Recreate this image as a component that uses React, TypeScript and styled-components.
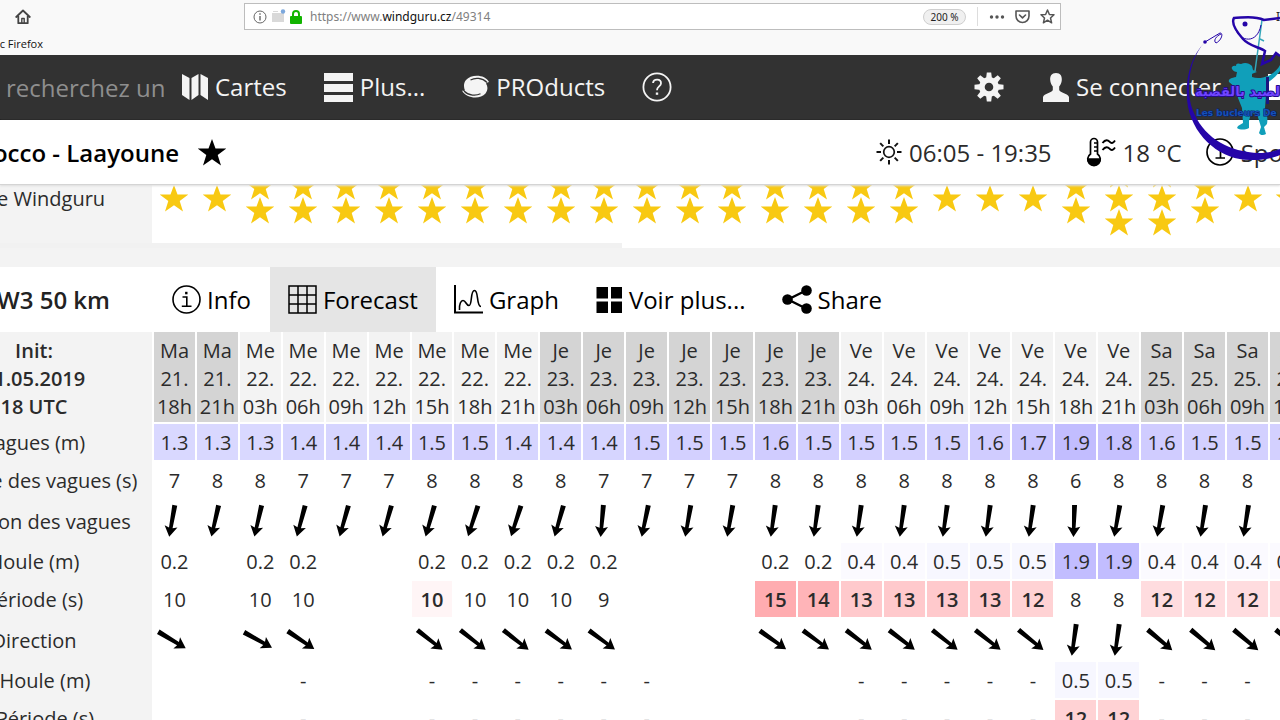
import React from "react";
import styled, { createGlobalStyle } from "styled-components";

const GlobalStyle = createGlobalStyle`
  * { box-sizing: border-box; }
  html, body { margin: 0; padding: 0; }
  body {
    background: #fff;
    color: #2b2b2b;
    font-family: "Open Sans", "Noto Sans", sans-serif;
    overflow-x: hidden;
  }
  button, input { font: inherit; color: inherit; }
`;

const Page = styled.div`
  position: relative;
  height: 100vh;
  overflow: hidden;
`;

/* ---------- browser chrome ---------- */

const Chrome = styled.div`
  background: #f9f9f9;
  height: 55px;
  font-family: "Noto Sans", "Open Sans", sans-serif;
  font-size: 12px;
  overflow: hidden;
`;

const ToolRow = styled.div`
  display: flex;
  align-items: center;
  padding-top: 3px;
  height: 30px;
`;

const ToolSide = styled.div<{ $width: number; $end?: boolean }>`
  flex: none;
  width: ${(p) => p.$width}px;
  display: flex;
  align-items: center;
  padding-left: ${(p) => (p.$end ? 0 : 15)}px;
`;

const EdgeLabel = styled.span`
  margin-left: auto;
  width: 4px;
  white-space: nowrap;
`;

const PlainButton = styled.button`
  display: inline-flex;
  align-items: center;
  flex: none;
  padding: 0;
  border: 0;
  background: none;
  cursor: pointer;
`;

const UrlBox = styled.div`
  flex: 1;
  display: flex;
  align-items: center;
  height: 27px;
  padding: 0 5px 0 8px;
  background: #fff;
  border: 1px solid #bdbdbd;
`;

const Url = styled.div`
  flex: 1;
  margin-left: 8px;
  color: #808080;
  b { font-weight: 400; color: #111; }
`;

const Badges = styled.div`
  display: flex;
  align-items: center;
  gap: 4px;
`;

const ZoomPill = styled.button`
  width: 43px;
  height: 16px;
  padding: 0;
  border: 1px solid #cfcfcf;
  border-radius: 8px;
  background: #f0f0f0;
  color: #222;
  font-size: 10px;
  line-height: 14px;
`;

const UrlActions = styled.div`
  display: flex;
  align-items: center;
  gap: 10px;
  height: 19px;
  margin-left: 11px;
  padding-left: 11px;
  border-left: 1px solid #ddd;
`;

const Bookmark = styled.a`
  display: flex;
  justify-content: flex-end;
  width: 43px;
  padding-top: 3px;
  color: #111;
  font-family: "Open Sans", sans-serif;
  font-size: 11px;
  line-height: 22px;
  white-space: nowrap;
  text-decoration: none;
`;

/* ---------- site header ---------- */

const Nav = styled.nav`
  display: flex;
  align-items: center;
  height: 65px;
  padding-left: 6px;
  background: #323232;
  border-bottom: 1px solid #1c1c1c;
  color: #f4f4f4;
  font-size: 24px;
  overflow: hidden;
`;

const Search = styled.input`
  width: 158px;
  margin-right: 18px;
  padding: 0;
  border: 0;
  outline: 0;
  background: none;
  &::placeholder { color: #8e8e8e; opacity: 1; }
`;

const NavLinks = styled.div`
  display: flex;
  align-items: center;
  gap: 37px;
`;

const NavLink = styled.a`
  display: flex;
  align-items: center;
  flex: none;
  gap: 7px;
  color: inherit;
  line-height: 32px;
  text-decoration: none;
  white-space: nowrap;
`;

const RightGroup = styled.div<{ $width: number; $gap: number }>`
  flex: none;
  width: ${(p) => p.$width}px;
  min-width: 0;
  display: flex;
  align-items: center;
  gap: ${(p) => p.$gap}px;
  margin-left: auto;
`;

const WhiteTile = styled.span`
  flex: none;
  width: 26px;
  height: 26px;
  margin-left: 8px;
  background: #fff;
`;

const SpotBar = styled.header`
  display: flex;
  align-items: center;
  position: relative;
  height: 65px;
  background: #fff;
  border-bottom: 1px solid #d4d4d4;
  box-shadow: 0 1px 2px #ddd;
  font-size: 24px;
  overflow: hidden;
`;

const EndText = styled.h1<{ $width: number }>`
  display: flex;
  justify-content: flex-end;
  flex: none;
  width: ${(p) => p.$width}px;
  margin: 0;
  color: #000;
  font-size: 24px;
  font-weight: 600;
  white-space: nowrap;
`;

const SpotFact = styled.span`
  display: flex;
  align-items: center;
  flex: none;
  gap: 7px;
  white-space: nowrap;
`;

const FactPair = styled.div`
  display: flex;
  flex: none;
  gap: 24px;
`;

/* ---------- forecast ---------- */

const Section = styled.section`
  background: #f3f3f3;
  overflow: hidden;
`;

const Sheet = styled.table<{ $lift?: boolean }>`
  table-layout: fixed;
  width: calc(100% + 115px);
  margin: ${(p) => (p.$lift ? "-31px" : "0")} 0 0 -84px;
  border-collapse: separate;
  border-spacing: 0;
  background: #fff;
  font-size: 20px;
  col:first-child { width: 236px; }
`;

const LabelCell = styled.th<{ $bold?: boolean }>`
  padding: ${(p) => (p.$bold ? 2 : 0)}px 0 0;
  background: #f3f3f3;
  font-weight: ${(p) => (p.$bold ? 600 : 400)};
  line-height: 28px;
  white-space: nowrap;
  text-align: center;
`;

const DayCell = styled.th<{ $dark: boolean }>`
  height: 92px;
  padding: 5px 0 1px;
  border-left: 2px solid #fff;
  border-bottom: 2px solid #fff;
  background: ${(p) => (p.$dark ? "#d4d4d4" : "#f3f3f3")};
  font-weight: 400;
  line-height: 28px;
  white-space: nowrap;
`;

const Cell = styled.td<{ $bg?: string; $bold?: boolean; $tall?: boolean }>`
  height: ${(p) => (p.$tall ? 43 : 38)}px;
  padding: ${(p) => (p.$tall ? 0 : 2)}px 0 0;
  border-left: 2px solid #fff;
  border-bottom: 2px solid #fff;
  background: ${(p) => p.$bg ?? "#fff"};
  font-weight: ${(p) => (p.$bold ? 600 : 400)};
  line-height: 28px;
  text-align: center;
  white-space: nowrap;
`;

const StarCell = styled.td`
  height: 89px;
  padding: 0 0 2px;
`;

const StarStack = styled.div`
  display: flex;
  flex-direction: column;
  align-items: center;
  padding-left: 2px;
  svg { margin: -1px 0 -2px; }
`;

const ScrollTrack = styled.div`
  height: 5px;
  background: #fff;
`;

const ScrollThumb = styled.div`
  width: 622px;
  height: 5px;
  background: #f1f1f1;
`;

const Spacer = styled.div`
  height: 19px;
`;

const TabBar = styled.div`
  display: flex;
  align-items: stretch;
  height: 65px;
  background: #fff;
`;

const Model = styled(EndText).attrs({ as: "h2" })`
  align-items: center;
  margin-right: 44px;
  color: #222;
`;

const Tab = styled.button<{ $active?: boolean }>`
  display: flex;
  align-items: center;
  flex: none;
  gap: 6px;
  padding: 0 18px;
  border: 0;
  background: ${(p) => (p.$active ? "#e5e5e5" : "transparent")};
  color: #000;
  font-size: 24px;
  white-space: nowrap;
  cursor: pointer;
  &:first-of-type { padding-right: 19px; }
`;

const Arrow = styled.svg`
  display: block;
  margin: 0 auto;
  overflow: visible;
`;

const Watermark = styled.svg`
  position: absolute;
  top: 0;
  right: 0;
  pointer-events: none;
`;

const Block = styled.svg`
  display: block;
  flex: none;
`;

const StarButton = styled(PlainButton)`
  margin-left: 19px;
`;

/* ---------- data ---------- */

const days: [string, string, string[]][] = [
  ["Ma", "21.", ["18h", "21h"]],
  ["Me", "22.", ["03h", "06h", "09h", "12h", "15h", "18h", "21h"]],
  ["Je", "23.", ["03h", "06h", "09h", "12h", "15h", "18h", "21h"]],
  ["Ve", "24.", ["03h", "06h", "09h", "12h", "15h", "18h", "21h"]],
  ["Sa", "25.", ["03h", "06h", "09h", "12h"]],
];
const columns = days.flatMap(([day, date, hours], i) =>
  hours.map((hour) => ({ day, date, hour, dark: i % 2 === 0 }))
);

const stars = [1, 1, 2, 2, 2, 2, 2, 2, 2, 2, 2, 2, 2, 2, 2, 2, 2, 2, 1, 1, 1, 2, 3, 3, 2, 1, 1];
const waves = "1.3 1.3 1.3 1.4 1.4 1.4 1.5 1.5 1.4 1.4 1.4 1.5 1.5 1.5 1.6 1.5 1.5 1.5 1.5 1.6 1.7 1.9 1.8 1.6 1.5 1.5 1.5".split(" ");
const wavePeriods = "7 8 8 7 7 7 8 8 8 8 7 7 7 7 8 8 8 8 8 8 8 6 8 8 8 8 8".split(" ");
const waveAngles = [10, 13, 13, 15, 16, 16, 16, 18, 18, 16, 5, 12, 10, 10, 8, 8, 8, 8, 8, 8, 8, 2, 10, 10, 9, 9, 9];
const swell = "0.2 _ 0.2 0.2 _ _ 0.2 0.2 0.2 0.2 0.2 _ _ _ 0.2 0.2 0.4 0.4 0.5 0.5 0.5 1.9 1.9 0.4 0.4 0.4 0.4".split(" ");
const swellPeriods = "10 _ 10 10 _ _ 10* 10 10 10 9 _ _ _ 15* 14* 13* 13* 13* 13* 12** 8 8 12* 12* 12* 12*".split(" ");
const swellAngles = [-59, null, -61, -56, null, null, -52, -52, -52, -54, -54, null, null, null, -55, -54, -53, -53, -52, -52, -51, 8, 8, -50, -50, -50, -50];
const swell2 = "_ _ _ - _ _ - - - - - - _ _ _ _ - - - - - 0.5 0.5 - - - -".split(" ");
const swell2Periods = "_ _ _ - _ _ - - - - - - _ _ _ _ - - - - - 12** 12** - - - -".split(" ");

const heightTint: Record<string, string> = {
  "0.4": "#fbfaff", "0.5": "#f7f7ff", "1.3": "#d9d8ff", "1.4": "#d6d5ff", "1.5": "#d3d0ff",
  "1.6": "#d0ccff", "1.7": "#cac6ff", "1.8": "#c6c1ff", "1.9": "#c2bdff",
};
const periodTint: Record<string, string> = {
  "10*": "#fff5f6", "12*": "#ffdcdf", "12**": "#ffd2d4", "13*": "#ffc9cc", "14*": "#ffb4b8", "15*": "#ffacb0",
};

/* ---------- drawings ---------- */

const StarIcon = ({ color = "#f8c912" }) => (
  <Block width="28" height="27" viewBox="0 0 28 27" fill={color}>
    <path d="M14 0 17.500 9.500H28.500L19.700 16 23 26.500 14 20.200 5 26.500 8.300 16 -.5 9.500H10.500Z" />
  </Block>
);

const DirArrow = ({ angle }: { angle: number }) => (
  <Arrow width="32" height="32" viewBox="-14 -16 32 32">
    <path transform={`rotate(${angle})`} d="M-2.500 -16H2.500L1.800 7 6.500 5.500 0 16-6.500 5.500-1.800 7Z" />
  </Arrow>
);

const HomeIcon = () => (
  <Block width="16" height="16" viewBox="0 0 16 16" fill="none" stroke="#444" strokeWidth="1.8" strokeLinejoin="round" strokeLinecap="round">
    <path d="M1.2 8 8 1.5 14.8 8M3.3 7v7.2h9.4V7" />
    <path d="M6.8 14V9.5h2.4V14" strokeWidth="1.4" />
  </Block>
);

const SmallInfoIcon = () => (
  <Block width="14" height="14" viewBox="0 0 14 14" fill="none" stroke="#666">
    <circle cx="7" cy="7" r="6" />
    <path d="M7 6v4.5M7 3.3v1.4" strokeWidth="1.4" />
  </Block>
);

const PermissionIcon = () => (
  <Block width="15" height="15" viewBox="0 0 15 15">
    <path d="M1 4h12v9H1zM2 2h5v1H2z" fill="#d9d9d9" />
    <circle cx="12" cy="2.5" r="2.2" fill="#7ba7dc" />
  </Block>
);

const LockIcon = () => (
  <Block width="12" height="14" viewBox="0 0 12 14">
    <path d="M3 7V4a3 3 0 0 1 6 0v3" fill="none" stroke="#12b400" strokeWidth="2" />
    <rect x="0" y="6" width="12" height="8" rx="1" fill="#12b400" />
  </Block>
);

const DotsIcon = () => (
  <Block width="16" height="16" viewBox="0 0 16 16" fill="#555">
    <circle cx="2.500" cy="8" r="1.700" /><circle cx="8" cy="8" r="1.700" /><circle cx="13.500" cy="8" r="1.700" />
  </Block>
);

const PocketIcon = () => (
  <Block width="15" height="15" viewBox="0 0 15 15" fill="none" stroke="#555" strokeWidth="1.6" strokeLinecap="round" strokeLinejoin="round">
    <path d="M1 2h13v5a6.500 6.500 0 0 1-13 0ZM4.500 6l3 2.800 3-2.800" />
  </Block>
);

const OutlineStarIcon = () => (
  <Block width="15" height="15" viewBox="0 0 15 15" fill="none" stroke="#555" strokeWidth="1.5" strokeLinejoin="round">
    <path d="M7.5 1 9.4 5.5 14 5.8 10.5 9 11.6 13.8 7.5 11.2 3.4 13.8 4.5 9 1 5.8 5.6 5.5Z" />
  </Block>
);

const MapIcon = () => (
  <Block width="26" height="28" viewBox="0 0 26 28" fill="#f4f4f4">
    <path d="M0 1 7.500 5V27L0 22ZM9.500 5 16.500 1V22L9.500 27ZM18.500 1 26 5V27L18.500 22Z" />
  </Block>
);

const BarsIcon = () => (
  <Block width="29" height="29" viewBox="0 0 29 29" fill="#f4f4f4">
    <path d="M0 0H29V8H0ZM0 11H29V19H0ZM0 22H29V29H0Z" />
  </Block>
);

const SwirlIcon = () => (
  <Block width="27" height="24" viewBox="0 0 27 24">
    <path d="M27 7C23 -1 9 -1 4 5 1.500 8 1.500 12 3 15.500 2 16 1 16 0 15.500 4 23.500 18 25 23.500 18.500 26 15 26 11.500 24 8.500 25 7.500 26 7 27 7Z" fill="#f4f4f4" />
    <path d="M25 7.500C20 2.500 13 2.500 8.500 5M2 16C7 21 14 21 18.500 18.800" fill="none" stroke="#323232" strokeWidth="1.200" />
  </Block>
);

const HelpIcon = () => (
  <Block width="30" height="30" viewBox="0 0 30 30" fill="none" stroke="#f4f4f4" strokeWidth="1.800">
    <circle cx="15" cy="15" r="13.600" />
    <path d="M11 11c.6-4.500 8-4.300 8 .2 0 3.200-4 3.300-4 7" />
    <path d="M15 20.500v2.300" strokeWidth="2.400" />
  </Block>
);

const GearIcon = () => (
  <Block width="30" height="30" viewBox="-15 -15 30 30" fill="#f4f4f4">
    {[0, 45, 90, 135, 180, 225, 270, 315].map((a) => (
      <path key={a} transform={`rotate(${a})`} d="M-3 -8 -2.200 -14.500H2.200L3 -8Z" />
    ))}
    <path d="M0-10A10 10 0 1 1 0 10 10 10 0 1 1 0-10ZM0-4.300A4.300 4.300 0 1 0 0 4.300 4.300 4.300 0 1 0 0-4.300Z" fillRule="evenodd" />
  </Block>
);

const UserIcon = () => (
  <Block width="26" height="29" viewBox="0 0 26 29" fill="#f4f4f4">
    <path d="M13 0C17.500 0 19 3 18.800 7 18.600 10 17.500 12 16.200 13.500V17C17 19.500 25 20.500 26 24V29H0V24C1 20.500 9 19.500 9.800 17V13.500C8.500 12 7.400 10 7.200 7 7 3 8.500 0 13 0Z" />
  </Block>
);

const SunIcon = () => (
  <Block width="26" height="26" viewBox="-13 -13 26 26" fill="none" stroke="#111" strokeWidth="2">
    <circle r="5.300" strokeWidth="1.700" />
    {[0, 45, 90, 135, 180, 225, 270, 315].map((a) => (
      <path key={a} transform={`rotate(${a})`} d="M0 -8V-12.500" />
    ))}
  </Block>
);

const ThermoIcon = () => (
  <Block width="30" height="30" viewBox="0 0 30 30" fill="none" stroke="#000" strokeWidth="1.700">
    <path d="M4.500 17V5a3.500 3.500 0 0 1 7 0V17a6.300 6.300 0 1 1-7 0Z" />
    <path d="M2 22H14A6 6 0 0 1 2 22Z" fill="#000" />
    <path d="M8 6h3M8 10h3M8 14h3" strokeWidth="1.300" />
    <path d="M16.500 6c3-4 5.500-3 7-1.300s3.500 2 5.500-1.200M16.500 13c3-4 5.500-3 7-1.300s3.500 2 5.500-1.200" strokeWidth="1.900" />
  </Block>
);

const OneIcon = () => (
  <Block width="28" height="28" viewBox="0 0 28 28" fill="none" stroke="#000" strokeWidth="1.700">
    <circle cx="14" cy="14" r="13" />
    <path d="M10 10 14.500 7.500V20M9.500 20H19" />
  </Block>
);

const InfoIcon = () => (
  <Block width="29" height="29" viewBox="0 0 29 29" fill="none" stroke="#000" strokeWidth="1.600">
    <circle cx="14.500" cy="14.500" r="13.500" />
    <path d="M10.500 12H14.800V21.300M9.800 21.300H19.500" />
    <path d="M14.300 6.800V9.300" strokeWidth="2.400" />
  </Block>
);

const GridIcon = () => (
  <Block width="29" height="29" viewBox="0 0 29 29" fill="none" stroke="#000" strokeWidth="1.500">
    <path d="M1 1H28V28H1ZM1 10H28M1 19H28M10 1V28M19 1V28" />
  </Block>
);

const GraphIcon = () => (
  <Block width="29" height="29" viewBox="0 0 29 29" fill="none" stroke="#000">
    <path d="M1 0V27.500H29" strokeWidth="2" />
    <path d="M5.500 25C5 19 7 15.500 9 15.500 12 15.500 12 20.500 15 20.500 18.500 20.500 16 5.500 20.500 5.500 25 5.500 22 21.500 27 21.500" strokeWidth="1.600" />
  </Block>
);

const TilesIcon = () => (
  <Block width="28" height="26" viewBox="0 0 28 26" fill="#000">
    <path d="M1.500 0H13V11.500H1.500ZM16 0H27V11.500H16ZM1.500 14.500H13V26H1.500ZM16 14.500H27V26H16Z" />
  </Block>
);

const ShareIcon = () => (
  <Block width="30" height="29" viewBox="0 0 30 29">
    <path d="M24 5.500 6 14.500 24 23.500" fill="none" stroke="#000" strokeWidth="2.400" />
    <circle cx="24.500" cy="5.500" r="5.300" /><circle cx="5.500" cy="14.500" r="5.300" /><circle cx="24.500" cy="23.500" r="5.300" />
  </Block>
);

const FishingLogo = () => (
  <Watermark width="120" height="180" viewBox="0 0 120 180">
    <path d="M72 69C71 67 73 65 76 66 76 63 78 63 81 64 85 62 89 63 92 66L93 70 97 72C95 73 93 73 92 74L92 77C97 79 103 78 108 76 114 73 118 69 120 65V71C116 77 110 81 107 83L106 95 105 108C107 113 108 119 107 124L104 127 106 134C103 136 100 135 99 133L101 127 97 114 91 113 89 121 89 128C85 130 80 130 77 128L78 126 83 123 82 108 78 98 76 88 69 82C68 79 71 78 76 77L77 72C75 72 73 71 72 69Z" fill="#109fba" />
    <path d="M102 20 95 71M100 39l4 2" fill="none" stroke="#35a7ba" strokeWidth="1.500" />
    <path d="M45 42C29 58 24 84 28 107 35 140 64 161 92 160 104 160 113 158 120 155V149C110 153 99 154 88 152 61 148 39 132 31 105 26 84 30 58 45 42Z" fill="#2505a8" />
    <g fill="none" stroke="#2505a8">
      <path d="M45 42 60 33C64 33 61 41 56 43 53 41 56 36 61 34" strokeWidth="1" />
      <path d="M120 18 104 20C93 15 82 18 74 18 71 23 76 31 83 39 89 46 99 47 105 51L102 64 111 60 116 53 120 56" strokeWidth="2.500" />
      <path d="M76 30C80 41 97 45 101 25" strokeWidth="1" />
    </g>
    <circle cx="45" cy="42" r="1.800" fill="#2505a8" />
    <circle cx="85" cy="24" r="2.500" fill="#2505a8" />
    <path d="M106 77H109V104H106Z" fill="#1b1580" />
    <g strokeLinejoin="round" paintOrder="stroke">
      <text x="35" y="96" fontFamily="DejaVu Sans, sans-serif" fontSize="13" fontWeight="700" fill="#7044ff" stroke="#240b8c" strokeWidth="2">الصيد بالقصبة</text>
      <text x="36" y="116" fontFamily="DejaVu Sans, sans-serif" fontSize="9" fontWeight="700" fill="#1450b8" stroke="#0a1d66" strokeWidth="1">Les bucleurs De</text>
    </g>
  </Watermark>
);

/* ---------- page ---------- */

const Columns = () => (
  <colgroup>
    <col />
    {columns.map((_, i) => <col key={i} />)}
  </colgroup>
);

type RowProps = { label: string; values: string[]; tint?: Record<string, string> };

const ValueRow = ({ label, values, tint = {} }: RowProps) => (
  <tr>
    <LabelCell scope="row">{label}</LabelCell>
    {values.map((v, i) => (
      <Cell key={i} $bg={tint[v]} $bold={v.endsWith("*")}>
        {v === "_" ? "" : v.replace(/\*/g, "")}
      </Cell>
    ))}
  </tr>
);

const ArrowRow = ({ label, angles }: { label: string; angles: (number | null)[] }) => (
  <tr>
    <LabelCell scope="row">{label}</LabelCell>
    {angles.map((a, i) => (
      <Cell key={i} $tall>{a !== null && <DirArrow angle={a} />}</Cell>
    ))}
  </tr>
);

export default function App() {
  return (
    <Page>
      <GlobalStyle />
      <Chrome>
        <ToolRow>
          <ToolSide $width={244}>
            <PlainButton aria-label="Accueil"><HomeIcon /></PlainButton>
          </ToolSide>
          <UrlBox>
            <Badges><SmallInfoIcon /><PermissionIcon /><LockIcon /></Badges>
            <Url role="textbox" aria-label="Adresse">https://www.<b>windguru.cz</b>/49314</Url>
            <ZoomPill>200 %</ZoomPill>
            <UrlActions>
              <PlainButton aria-label="Actions"><DotsIcon /></PlainButton>
              <PlainButton aria-label="Pocket"><PocketIcon /></PlainButton>
              <PlainButton aria-label="Marque-page"><OutlineStarIcon /></PlainButton>
            </UrlActions>
          </UrlBox>
          <ToolSide $width={219} $end><EdgeLabel>In</EdgeLabel></ToolSide>
        </ToolRow>
        <Bookmark href="#">Débuter avec Firefox</Bookmark>
      </Chrome>

      <Nav>
        <Search placeholder="recherchez un" aria-label="recherchez un spot" />
        <NavLinks>
          <NavLink href="#"><MapIcon />Cartes</NavLink>
          <NavLink href="#"><BarsIcon />Plus...</NavLink>
          <NavLink href="#"><SwirlIcon />PROducts</NavLink>
          <NavLink href="#" aria-label="Aide"><HelpIcon /></NavLink>
        </NavLinks>
        <RightGroup $width={306} $gap={39}>
          <PlainButton aria-label="Réglages"><GearIcon /></PlainButton>
          <NavLink href="#"><UserIcon />Se connecter</NavLink>
          <WhiteTile />
        </RightGroup>
      </Nav>

      <SpotBar>
        <EndText $width={179}>Morocco - Laayoune</EndText>
        <StarButton aria-label="Favori"><StarIcon color="#000" /></StarButton>
        <RightGroup $width={404} $gap={34}>
          <SpotFact><SunIcon />06:05 - 19:35</SpotFact>
          <FactPair>
            <SpotFact><ThermoIcon />18 °C</SpotFact>
            <SpotFact><OneIcon />Spots</SpotFact>
          </FactPair>
        </RightGroup>
      </SpotBar>

      <Section>
        <Sheet $lift>
          <Columns />
          <tbody>
            <tr>
              <LabelCell scope="row">Note Windguru</LabelCell>
              {stars.map((n, i) => (
                <StarCell key={i}>
                  <StarStack>
                    {Array.from({ length: n }, (_, k) => <StarIcon key={k} />)}
                  </StarStack>
                </StarCell>
              ))}
            </tr>
          </tbody>
        </Sheet>
        <ScrollTrack><ScrollThumb /></ScrollTrack>
        <Spacer />
        <TabBar>
          <Model $width={110}>WW3 50 km</Model>
          <Tab><InfoIcon />Info</Tab>
          <Tab $active><GridIcon />Forecast</Tab>
          <Tab><GraphIcon />Graph</Tab>
          <Tab><TilesIcon />Voir plus...</Tab>
          <Tab><ShareIcon />Share</Tab>
        </TabBar>
        <Sheet>
          <Columns />
          <thead>
            <tr>
              <LabelCell $bold scope="col">Init:<br />21.05.2019<br />18 UTC</LabelCell>
              {columns.map((c, i) => (
                <DayCell key={i} scope="col" $dark={c.dark}>{c.day}<br />{c.date}<br />{c.hour}</DayCell>
              ))}
            </tr>
          </thead>
          <tbody>
            <ValueRow label="Vagues (m)" values={waves} tint={heightTint} />
            <ValueRow label="Période des vagues (s)" values={wavePeriods} />
            <ArrowRow label="Direction des vagues" angles={waveAngles} />
            <ValueRow label="Houle (m)" values={swell} tint={heightTint} />
            <ValueRow label="Période (s)" values={swellPeriods} tint={periodTint} />
            <ArrowRow label="Direction" angles={swellAngles} />
            <ValueRow label="2. Houle (m)" values={swell2} tint={heightTint} />
            <ValueRow label="2. Période (s)" values={swell2Periods} tint={periodTint} />
          </tbody>
        </Sheet>
      </Section>
      <FishingLogo />
    </Page>
  );
}
